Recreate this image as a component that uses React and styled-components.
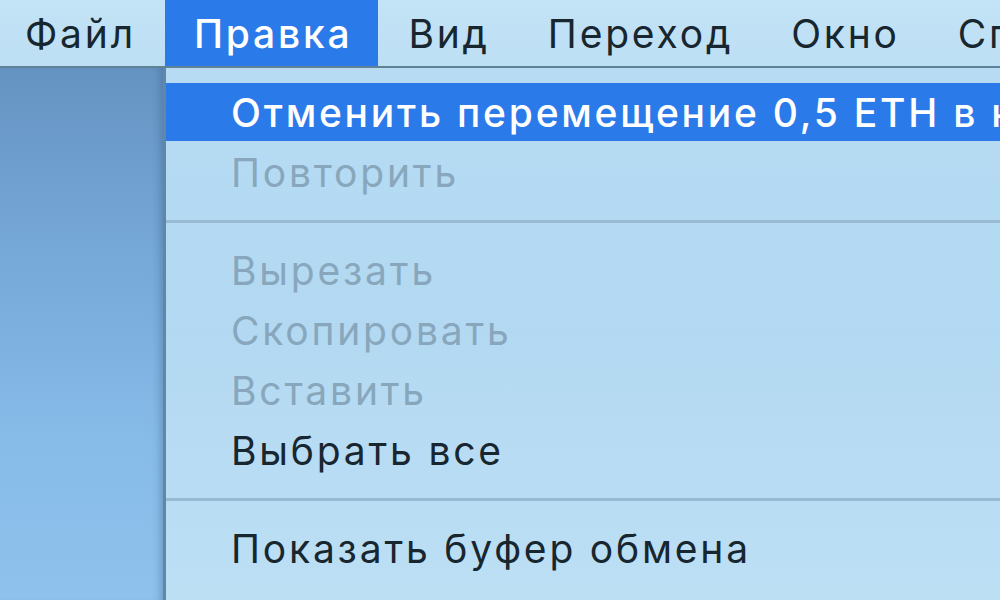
import React from "react";
import styled, { createGlobalStyle, css } from "styled-components";

const Global = createGlobalStyle`
  html, body { margin: 0; padding: 0; }
  body {
    width: 1000px;
    height: 600px;
    overflow: hidden;
    font-family: Inter, "Noto Sans", "Liberation Sans", sans-serif;
    -webkit-font-smoothing: antialiased;
  }
`;

const Screen = styled.div`
  width: 1000px;
  height: 600px;
  display: flex;
  flex-direction: column;
  overflow: hidden;
  background: #b9ddf4;
`;

const MenuBar = styled.div`
  height: 66px;
  flex: none;
  display: flex;
  align-items: stretch;
  background: linear-gradient(#c3e3f6, #bddff4);
  border-bottom: 2px solid #5f8297;
  white-space: nowrap;
  overflow: hidden;
`;

const MenuTitle = styled.div`
  display: flex;
  align-items: center;
  flex: none;
  padding: 0 28px 0 30px;
  font-size: 39px;
  letter-spacing: 2.8px;
  color: #17262f;
  ${(p) => p.$first && css`padding-left: 25px; padding-right: 29px;`}
  ${(p) =>
    p.$active &&
    css`
      padding: 0 26px 0 29px;
      background: #2b7ae9;
      color: #ffffff;
      font-weight: 500;
    `}
`;

const Body = styled.div`
  flex: 1;
  display: flex;
  min-height: 0;
`;

const Desktop = styled.div`
  width: 163px;
  flex: none;
  background: linear-gradient(180deg, #6593c2 0%, #76a8d8 35%, #87bbe8 70%, #8fc2ec 100%);
  box-shadow: inset -8px 0 8px -6px rgba(40, 70, 100, 0.35);
`;

const Menu = styled.div`
  flex: 1;
  min-width: 0;
  display: flex;
  flex-direction: column;
  padding-top: 15px;
  background: linear-gradient(180deg, #b6dbf3 0%, #b3d9f2 50%, #bcdff4 100%);
  border-left: 3px solid #5e88ab;
  white-space: nowrap;
  overflow: hidden;
`;

const Item = styled.div`
  height: 58px;
  flex: none;
  display: flex;
  align-items: center;
  padding-left: 65px;
  font-size: 39px;
  letter-spacing: 2.8px;
  color: ${(p) => (p.$disabled ? "#88a7bc" : "#17262f")};
  ${(p) =>
    p.$active &&
    css`
      letter-spacing: 2.75px;
      background: #2b7ae9;
      color: #ffffff;
      font-weight: 500;
    `}
`;

const Spacer = styled.div`
  height: ${(p) => p.$h}px;
  flex: none;
`;

const Separator = styled.div`
  height: 40px;
  flex: none;
  display: flex;
  align-items: center;
  &::after {
    content: "";
    display: block;
    width: 100%;
    height: 3px;
    background: #98bbd3;
  }
`;

const titles = ["Файл", "Правка", "Вид", "Переход", "Окно", "Справка"];

export default function App() {
  return (
    <>
      <Global />
      <Screen>
        <MenuBar>
          {titles.map((t, i) => (
            <MenuTitle key={t} $first={i === 0} $active={i === 1}>
              {t}
            </MenuTitle>
          ))}
        </MenuBar>
        <Body>
          <Desktop />
          <Menu>
            <Item $active>Отменить перемещение 0,5 ETH в кошелёк</Item>
            <Spacer $h={2} />
            <Item $disabled>Повторить</Item>
            <Separator />
            <Item $disabled>Вырезать</Item>
            <Spacer $h={2} />
            <Item $disabled>Скопировать</Item>
            <Spacer $h={2} />
            <Item $disabled>Вставить</Item>
            <Spacer $h={2} />
            <Item>Выбрать все</Item>
            <Separator />
            <Item>Показать буфер обмена</Item>
          </Menu>
        </Body>
      </Screen>
    </>
  );
}
